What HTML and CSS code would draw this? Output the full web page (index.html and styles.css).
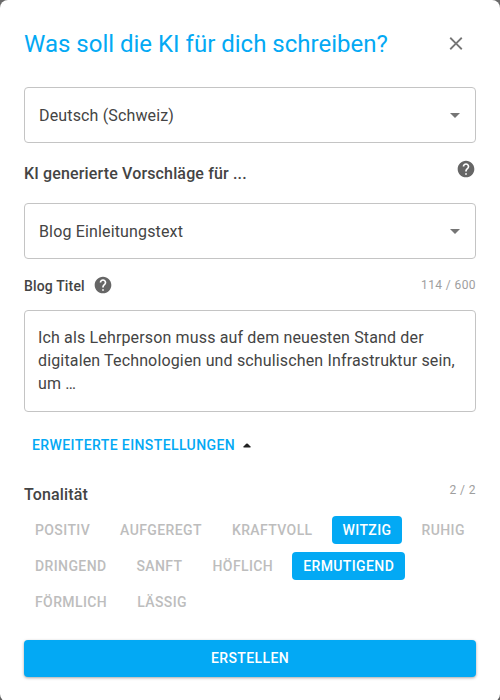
FILE: index.html
```
<!DOCTYPE html>
<html lang="de">
<head>
  <meta charset="UTF-8">
  <meta name="viewport" content="width=device-width, initial-scale=1.0">
  <title>KI Text erstellen</title>
  <link rel="stylesheet" href="styles.css">
</head>
<body>
  <div class="dialog">
    <!-- Header -->
    <div class="header">
      <h1>Was soll die KI für dich schreiben?</h1>
      <button class="close" aria-label="Schliessen">
        <svg class="icon" viewBox="0 0 24 24"><path d="M19 6.41L17.59 5 12 10.59 6.41 5 5 6.41 10.59 12 5 17.59 6.41 19 12 13.41 17.59 19 19 17.59 13.41 12z"/></svg>
      </button>
    </div>

    <div class="select">
      <span>Deutsch (Schweiz)</span>
      <svg class="icon" viewBox="0 0 24 24"><path d="M7 10l5 5 5-5z"/></svg>
    </div>

    <div class="section-title">
      <h2>KI generierte Vorschläge für ...</h2>
      <svg class="help" viewBox="0 0 24 24"><path d="M12 2C6.48 2 2 6.48 2 12s4.48 10 10 10 10-4.48 10-10S17.52 2 12 2zm1 17h-2v-2h2v2zm2.07-7.75l-.9.92C13.45 12.9 13 13.5 13 15h-2v-.5c0-1.1.45-2.1 1.17-2.83l1.24-1.26c.37-.36.59-.86.59-1.41 0-1.1-.9-2-2-2s-2 .9-2 2H8c0-2.21 1.79-4 4-4s4 1.79 4 4c0 .88-.36 1.68-.93 2.25z"/></svg>
    </div>

    <div class="select">
      <span>Blog Einleitungstext</span>
      <svg class="icon" viewBox="0 0 24 24"><path d="M7 10l5 5 5-5z"/></svg>
    </div>

    <!-- Blog title -->
    <div class="field-label">
      <label for="blog-title">Blog Titel</label>
      <svg class="help" viewBox="0 0 24 24"><path d="M12 2C6.48 2 2 6.48 2 12s4.48 10 10 10 10-4.48 10-10S17.52 2 12 2zm1 17h-2v-2h2v2zm2.07-7.75l-.9.92C13.45 12.9 13 13.5 13 15h-2v-.5c0-1.1.45-2.1 1.17-2.83l1.24-1.26c.37-.36.59-.86.59-1.41 0-1.1-.9-2-2-2s-2 .9-2 2H8c0-2.21 1.79-4 4-4s4 1.79 4 4c0 .88-.36 1.68-.93 2.25z"/></svg>
      <span class="counter">114 / 600</span>
    </div>
    <textarea id="blog-title" class="text">Ich als Lehrperson muss auf dem neuesten Stand der digitalen Technologien und schulischen Infrastruktur sein, um …</textarea>

    <button class="advanced">
      Erweiterte Einstellungen
      <svg class="caret" viewBox="0 0 8 5"><path d="M.5 4.5v-1L3.2.8q.8-.6 1.600 0l2.700 2.700v1z"/></svg>
    </button>

    <!-- Tone -->
    <div class="tone-title">
      <h2>Tonalität</h2>
      <span class="counter">2 / 2</span>
    </div>
    <div class="tones">
      <button>Positiv</button>
      <button>Aufgeregt</button>
      <button>Kraftvoll</button>
      <button class="active">Witzig</button>
      <button>Ruhig</button>
      <button>Dringend</button>
      <button>Sanft</button>
      <button>Höflich</button>
      <button class="active">Ermutigend</button>
      <button>Förmlich</button>
      <button>Lässig</button>
    </div>

    <button class="submit">Erstellen</button>
  </div>
</body>
</html>
```
FILE: styles.css
```
* {
  box-sizing: border-box;
}

body {
  margin: 0;
  height: 100vh;
  overflow: hidden;
  background-color: #6b6b6b;
  font-family: Roboto, "Liberation Sans", sans-serif;
  color: #444;
}

button {
  border: none;
  background: none;
  padding: 0;
  font-family: inherit;
  font-weight: 500;
  text-transform: uppercase;
  cursor: pointer;
}

h1,
h2 {
  margin: 0;
}

/* Dialog */
.dialog {
  display: flex;
  flex-direction: column;
  padding: 24px 24px 25px;
  background-color: #fff;
  border-radius: 8px;
  box-shadow: 0 11px 15px rgba(0, 0, 0, 0.2);
}

.header {
  display: flex;
  justify-content: space-between;
  align-items: center;
  height: 40px;
  margin-bottom: 23px;
}

.header h1 {
  font-size: 24px;
  font-weight: 400;
  color: #03a9f4;
}

.close {
  display: flex;
  padding: 8px 9px 9px;
}

.icon {
  width: 24px;
  height: 24px;
  fill: #757575;
}

.close .icon {
  width: 22px;
  height: 23px;
}

/* Select boxes */
.select {
  display: flex;
  justify-content: space-between;
  align-items: center;
  height: 56px;
  padding: 0 8px 0 14px;
  border: 1px solid #c4c4c4;
  border-radius: 4px;
  font-size: 16px;
  line-height: 20px;
  letter-spacing: 0.15px;
}

.select span {
  padding-top: 2px;
}

.help {
  width: 20px;
  height: 20px;
  fill: #666;
}

/* Titles */
.section-title {
  display: flex;
  justify-content: space-between;
  height: 60px;
  padding-top: 16px;
}

.section-title h2,
.tone-title h2 {
  font-size: 16px;
  font-weight: 500;
  line-height: 30px;
  letter-spacing: 0.15px;
}

.field-label {
  display: flex;
  align-items: center;
  height: 51px;
  padding-top: 1px;
  font-size: 14px;
  font-weight: 500;
  letter-spacing: 0.15px;
}

.field-label label {
  padding-top: 2px;
}

.field-label .help {
  margin-left: 8px;
}

.counter {
  margin-left: auto;
  font-size: 12px;
  font-weight: 400;
  letter-spacing: 0.4px;
  color: #9e9e9e;
}

.text {
  height: 102px;
  padding: 15px 13px;
  border: 1px solid #c4c4c4;
  border-radius: 4px;
  outline: none;
  resize: none;
  font-family: inherit;
  font-size: 16px;
  line-height: 23px;
  letter-spacing: 0.15px;
  color: #444;
}

.advanced {
  display: flex;
  align-items: center;
  gap: 8px;
  height: 36px;
  margin-top: 15px;
  padding-left: 8px;
  font-size: 14px;
  letter-spacing: 0.4px;
  color: #03a9f4;
}

.caret {
  width: 8px;
  height: 5px;
  margin-top: 1px;
  fill: #212121;
}

/* Tone buttons */
.tone-title {
  display: flex;
  height: 36px;
  margin-top: 17px;
}

.tone-title .counter {
  padding-top: 3px;
}

.tones {
  display: flex;
  flex-wrap: wrap;
  gap: 8px;
  margin-right: -8px;
}

.tones button {
  height: 28px;
  padding: 0 11px;
  border-radius: 4px;
  font-size: 14px;
  letter-spacing: 0.39px;
  color: #bdbdbd;
}

.tones button.active {
  background-color: #03a9f4;
  color: #fff;
}

.submit {
  height: 37px;
  margin-top: 24px;
  padding-bottom: 1px;
  border-radius: 4px;
  background-color: #03a9f4;
  box-shadow: 0 1px 3px rgba(0, 0, 0, 0.35);
  font-size: 14px;
  letter-spacing: 0.4px;
  color: #fff;
}
```
